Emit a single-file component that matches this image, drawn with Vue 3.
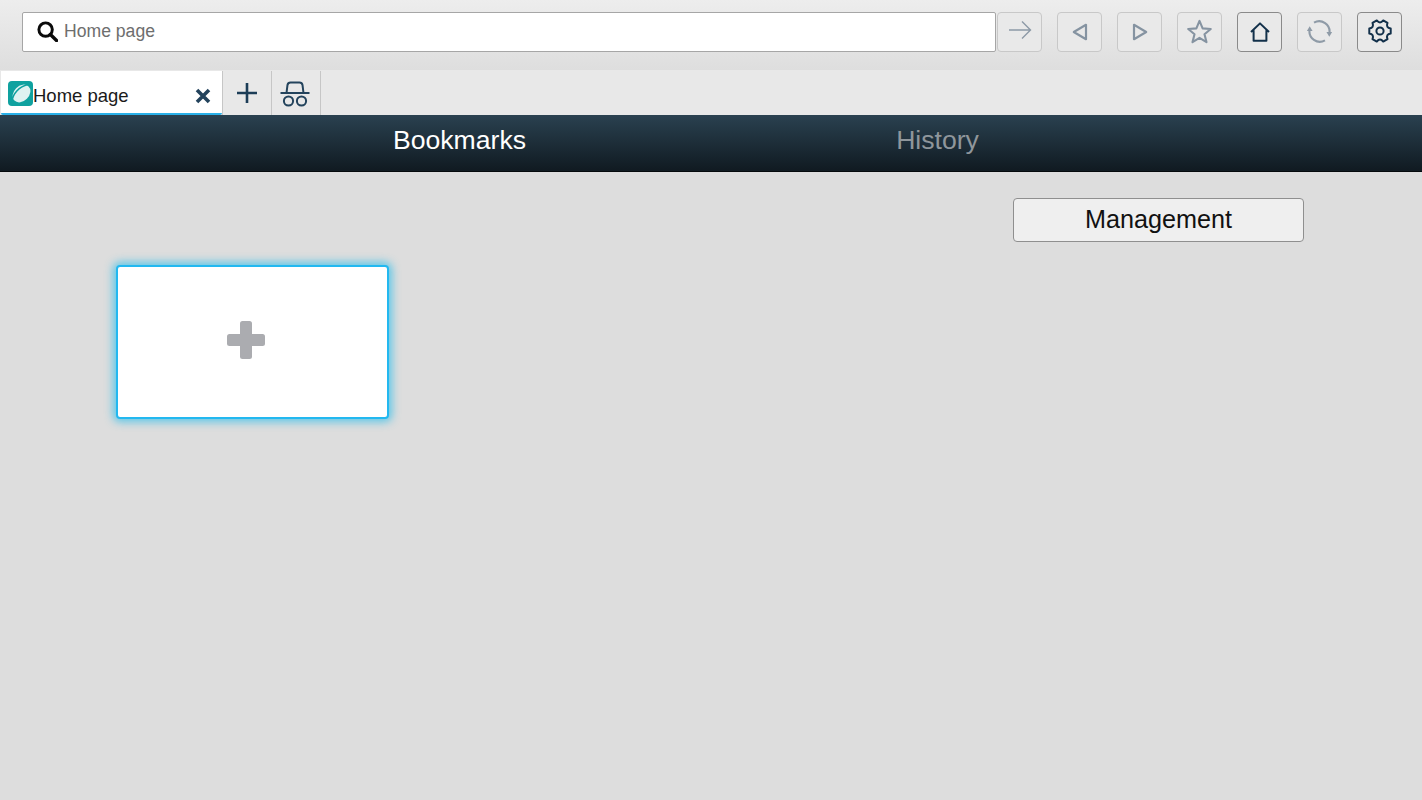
<script setup>
const tools = [
  { id: 'back', off: true },
  { id: 'forward', off: true },
  { id: 'star', off: true },
  { id: 'home', off: false },
  { id: 'reload', off: true },
  { id: 'gear', off: false },
]
</script>

<template>
  <div class="page">
    <header class="toolbar">
      <div class="search-group">
        <div class="search">
          <svg class="search-icon" viewBox="0 0 20 20" width="21" height="21">
            <circle cx="8.2" cy="8.2" r="6.4" fill="none" stroke="#0a0a0a" stroke-width="2.8" />
            <path d="M12.8 12.8 L18.6 18.6" stroke="#0a0a0a" stroke-width="3.2" stroke-linecap="round" />
          </svg>
          <span class="search-text">Home page</span>
        </div>
        <button class="tool off go">
          <svg class="go-icon" viewBox="0 0 24 20" width="24" height="20" fill="none" stroke="#8c99a6" stroke-width="1.4">
            <path d="M1 10 H22.5 M14 1.5 L22.5 10 L14 18.5" />
          </svg>
        </button>
      </div>
      <div class="tools">
        <button v-for="t in tools" :key="t.id" class="tool" :class="{ off: t.off }">
          <svg v-if="t.id === 'back'" viewBox="0 0 16 18" width="16" height="18" fill="none" stroke="#8593a1" stroke-width="2.2">
            <path d="M14 1.8 V16.2 L1.8 9 Z" stroke-linejoin="round" />
          </svg>
          <svg v-else-if="t.id === 'forward'" viewBox="0 0 16 18" width="16" height="18" fill="none" stroke="#8593a1" stroke-width="2.2">
            <path d="M2 1.8 V16.2 L14.2 9 Z" stroke-linejoin="round" />
          </svg>
          <svg v-else-if="t.id === 'star'" class="up-1" viewBox="0 0 24 24" width="25" height="25" fill="none" stroke="#8593a1" stroke-width="2">
            <path d="M12 1.8 L15 9 L22.8 9.6 L16.8 14.6 L18.7 22.2 L12 18.1 L5.3 22.2 L7.2 14.6 L1.2 9.6 L9 9 Z" stroke-linejoin="round" />
          </svg>
          <svg v-else-if="t.id === 'home'" viewBox="0 0 20 20" width="20" height="20" fill="none" stroke="#12304a" stroke-width="2">
            <path d="M1 10 L10 1.4 L19 10 M3.6 8.2 V18.7 H16.4 V8.2" stroke-linejoin="round" />
          </svg>
          <svg v-else-if="t.id === 'reload'" class="up-1" viewBox="-1 -1 26 26" width="25" height="25" fill="none" stroke="#8f9ba7" stroke-width="2.2">
            <path d="M6.3 2.7 A10.8 10.8 0 0 1 22.3 13.8" />
            <path d="M17.7 21.3 A10.8 10.8 0 0 1 1.7 10.2" />
            <path d="M19.2 12.4 H25.2 L22.2 17.4 Z M-1.2 11.6 H4.8 L1.8 6.6 Z" fill="#8f9ba7" stroke="none" />
          </svg>
          <svg v-else class="up-1" viewBox="0 0 24 24" width="24" height="24" fill="none" stroke="#12304a" stroke-width="2">
            <path d="M22.7 9.53 L22.7 14.47 Q17.63 15.25 19.5 20.04 L15.22 22.52 Q12 18.5 8.78 22.52 L4.5 20.04 Q6.37 15.25 1.3 14.47 L1.3 9.53 Q6.37 8.75 4.5 3.96 L8.78 1.48 Q12 5.5 15.22 1.48 L19.5 3.96 Q17.63 8.75 22.7 9.53 Z" stroke-linejoin="round" />
            <circle cx="12" cy="12" r="3.6" />
          </svg>
        </button>
      </div>
    </header>

    <div class="tabstrip">
      <div class="tab">
        <svg class="logo" viewBox="0 0 25 25" width="25" height="25">
          <rect width="25" height="25" rx="4" fill="#0fa19f" />
          <ellipse cx="13.5" cy="12.5" rx="10" ry="7.6" transform="rotate(-45 13.5 12.5)" fill="#dff2f1" />
          <path d="M4 20.5 C4.5 13 11 5.5 20 3.5" fill="none" stroke="#0fa19f" stroke-width="1.6" />
        </svg>
        <span class="tab-title">Home page</span>
        <svg class="tab-close" viewBox="0 0 16 16" width="16" height="16">
          <path d="M2 2 L14 14 M14 2 L2 14" stroke="#23435c" stroke-width="3.6" />
        </svg>
      </div>
      <button class="strip-btn">
        <svg viewBox="0 0 22 22" width="22" height="22">
          <path d="M11 1 V21 M1 11 H21" stroke="#1c3d57" stroke-width="2.6" />
        </svg>
      </button>
      <button class="strip-btn">
        <svg class="hat" viewBox="0 0 30 28" width="30" height="28" fill="none" stroke="#23435c" stroke-width="2">
          <path d="M0.5 14 H29.5" />
          <path d="M6.5 14 L7.5 6 Q8 3.5 10.5 3.5 H19.5 Q22 3.5 22.5 6 L23.5 14" />
          <circle cx="8.5" cy="22" r="4.6" />
          <circle cx="21.5" cy="22" r="4.6" />
        </svg>
      </button>
    </div>

    <nav class="nav">
      <span class="nav-item active">Bookmarks</span>
      <span class="nav-item history">History</span>
    </nav>

    <main class="content">
      <div class="actions">
        <button class="manage">Management</button>
      </div>
      <div class="cards">
        <button class="add-card">
          <svg viewBox="0 0 38 38" width="38" height="38" fill="#abacb0">
            <rect x="13" y="0" width="12" height="38" rx="2.5" />
            <rect x="0" y="13" width="38" height="12" rx="2.5" />
          </svg>
        </button>
      </div>
    </main>
  </div>
</template>

<style>
html, body { margin: 0; padding: 0; }
</style>

<style scoped>
.page {
  width: 1422px;
  height: 800px;
  overflow: hidden;
  display: flex;
  flex-direction: column;
  background: #dddddd;
  font-family: "Liberation Sans", Arial, sans-serif;
}
button { font-family: inherit; padding: 0; cursor: pointer; }

.toolbar {
  height: 70px;
  box-sizing: border-box;
  padding: 12px 20px 0 22px;
  display: flex;
  gap: 15px;
  align-items: flex-start;
  background: linear-gradient(#ededed, #dedede);
}
.search-group { display: flex; gap: 1px; }
.search {
  width: 974px;
  height: 40px;
  box-sizing: border-box;
  display: flex;
  align-items: center;
  gap: 6px;
  padding: 0 0 2px 14px;
  background: #fff;
  border: 1.5px solid #a6a6a6;
  border-radius: 2px;
}
.search-text { font-size: 17.6px; color: #6e6e6e; }
.go-icon { margin-bottom: 4px; }
.up-1 { margin-bottom: 2px; }
.tools { display: flex; gap: 15px; }
.tool {
  width: 45px;
  height: 40px;
  box-sizing: border-box;
  display: flex;
  align-items: center;
  justify-content: center;
  background: #e9e9e9;
  border: 1.5px solid #8a8a8a;
  border-radius: 4px;
}
.tool.off { border-color: #c8c8c8; }

.tabstrip {
  height: 45px;
  box-sizing: border-box;
  padding-top: 1px;
  display: flex;
  background: #e8e8e8;
}
.tab {
  width: 221px;
  margin-left: 1px;
  box-sizing: border-box;
  display: flex;
  align-items: center;
  padding: 0 11px 0 6.5px;
  background: #fff;
  border-bottom: 2px solid #29b0e8;
  border-radius: 0 0 2px 2px;
}
.logo { margin-top: 2px; margin-right: 0.5px; }
.tab-title { flex: 1; font-size: 18.5px; color: #1a1a1a; margin-top: 8px; }
.tab-close { margin-top: 8px; }
.strip-btn {
  width: 49px;
  display: flex;
  align-items: center;
  justify-content: center;
  background: #e8e8e8;
  border: 0;
  border-left: 1px solid #c6c6c6;
  padding-bottom: 1px;
}
.hat { margin-right: 2px; }
.strip-btn:last-child { border-right: 1px solid #c6c6c6; width: 50px; }

.nav {
  height: 57px;
  box-sizing: border-box;
  padding: 0 0 5px 220px;
  display: grid;
  grid-template-columns: 479px 477px;
  align-items: center;
  background: linear-gradient(#2a4150, #101a21);
  border-bottom: 1px solid #05090c;
}
.nav-item {
  text-align: center;
  font-size: 26.6px;
  color: #8f969b;
}
.nav-item.active { color: #fff; }

.content { flex: 1; padding-top: 26px; }
.actions {
  display: flex;
  justify-content: flex-end;
  padding-right: 118px;
}
.manage {
  width: 291px;
  height: 44px;
  padding-bottom: 2px;
  font-size: 25.2px;
  color: #111;
  background: #efefef;
  border: 1px solid #8f8f8f;
  border-radius: 4px;
}
.cards {
  padding: 23px 0 0 116px;
  display: flex;
}
.add-card {
  width: 273px;
  height: 154px;
  box-sizing: border-box;
  display: flex;
  align-items: center;
  justify-content: center;
  padding: 0 13px 4px 0;
  background: #fff;
  border: 2.5px solid #22b8f0;
  border-radius: 4px;
  box-shadow: 0 0 9px 3px rgba(40, 190, 235, 0.7);
}
</style>
